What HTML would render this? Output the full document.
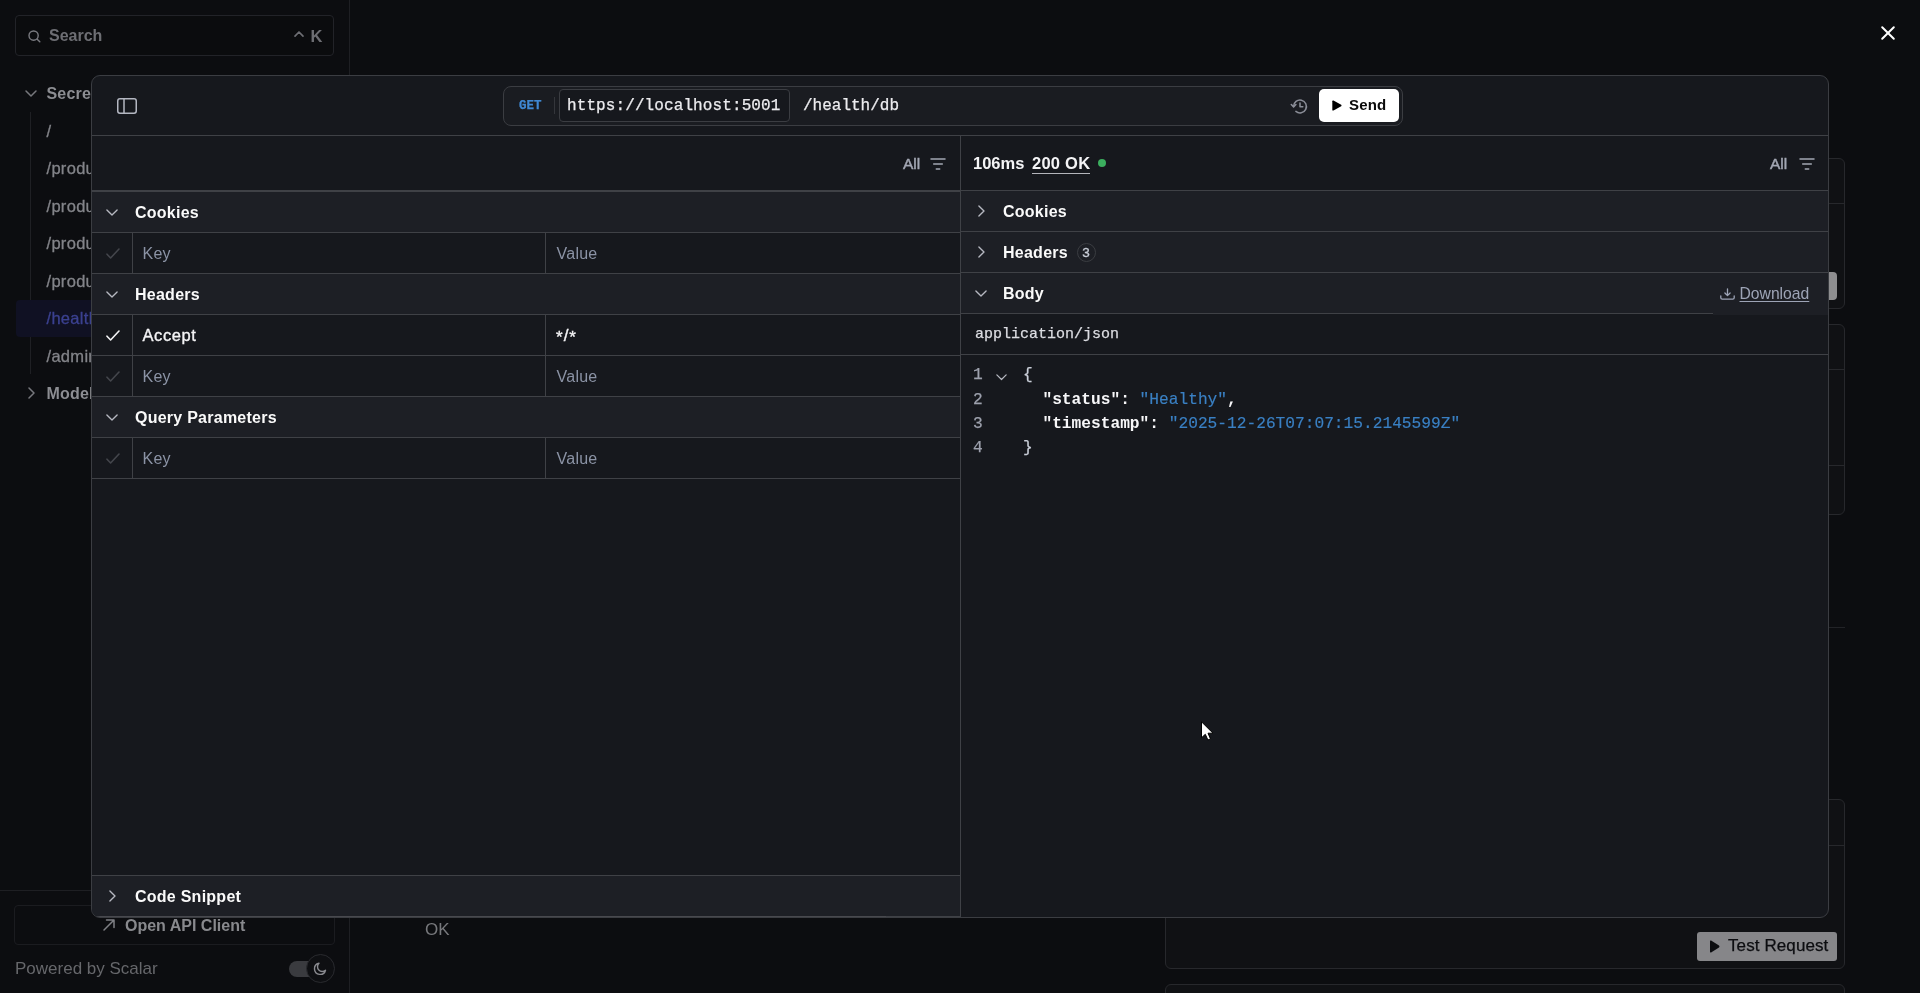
<!DOCTYPE html>
<html lang="en">
<head>
<meta charset="utf-8">
<title>Scalar API Client</title>
<style>
*{box-sizing:border-box;margin:0;padding:0}
html,body{width:1920px;height:993px;overflow:hidden;background:#0c0d10;}
body{position:relative;font-family:"Liberation Sans",sans-serif;color:#fafafa;font-size:16px;line-height:1}
.abs{position:absolute}
.mono{font-family:"Liberation Mono",monospace;-webkit-text-stroke:.25px currentColor}
svg{display:block;overflow:visible}

/* ---------- dimmed page behind ---------- */
#sidebar{position:absolute;left:0;top:0;width:350px;height:993px;border-right:1px solid #1e1f23;will-change:transform}
#search{position:absolute;left:15px;top:15px;width:319px;height:41px;border:1px solid #222328;border-radius:4px;background:#0b0c0e}
.sb-item{position:absolute;left:46.5px;font-size:16.5px;letter-spacing:.3px;-webkit-text-stroke:.3px currentColor;color:#838489;white-space:nowrap;line-height:20px;height:20px}
.sb-bold{-webkit-text-stroke:0;letter-spacing:.2px;font-weight:bold;color:#8c8d92;font-size:16px}

/* ---------- modal ---------- */
#modal{position:absolute;left:91px;top:75px;width:1738px;height:843px;background:#16181d;border:1px solid #3b3d42;border-radius:9px;overflow:hidden}
.hl{position:absolute;height:1px;background:#3f4146}
.vl{position:absolute;width:1px;background:#3f4146}
.sec{position:absolute;height:40px;background:#1d1f25}
.sec-t{letter-spacing:.25px;margin-top:1px;position:absolute;font-weight:bold;font-size:16px;line-height:20px;color:#fafafa;white-space:nowrap}
.ph{letter-spacing:.2px;margin-top:1px;margin-left:.6px;position:absolute;font-size:16px;line-height:20px;color:#8b93a5;white-space:nowrap}
.val{margin-top:1px;position:absolute;font-size:16px;line-height:20px;color:#f4f4f6;white-space:nowrap}
</style>
</head>
<body>

<!-- ================= BACKGROUND PAGE (dimmed) ================= -->
<div id="sidebar">
  <div id="search">
    <svg class="abs" style="left:12px;top:14px" width="13" height="13" viewBox="0 0 13 13" fill="none" stroke="#7a7b80" stroke-width="1.4" stroke-linecap="round"><circle cx="5.6" cy="5.6" r="4.6"/><path d="M9.2 9.2 L11.8 11.8"/></svg>
    <div class="abs" style="left:33px;top:10px;font-size:16px;line-height:20px;font-weight:bold;color:#6d6e73">Search</div>
    <svg class="abs" style="left:278px;top:14.5px" width="10" height="6" viewBox="0 0 10 6" fill="none" stroke="#6d6e73" stroke-width="1.7" stroke-linecap="round" stroke-linejoin="round"><path d="M1 5.2 L5 1 L9 5.2"/></svg>
    <div class="abs" style="left:294.5px;top:10px;font-size:16.5px;line-height:20px;font-weight:bold;color:#6d6e73">K</div>
  </div>
  <svg class="abs" style="left:25px;top:90px" width="12" height="7" viewBox="0 0 12 7" fill="none" stroke="#77787d" stroke-width="1.5" stroke-linecap="round" stroke-linejoin="round"><path d="M1 1 L6 6 L11 1"/></svg>
  <div class="sb-item sb-bold" style="top:84px">Secrets</div>
  <div class="abs" style="left:30px;top:112px;width:1px;height:262px;background:#1f2024"></div>
  <div class="abs" style="left:16px;top:300px;width:320px;height:37px;border-radius:4px;background:#101123"></div>
  <div class="sb-item" style="top:121px">/</div>
  <div class="sb-item" style="top:158px">/products</div>
  <div class="sb-item" style="top:196px">/products</div>
  <div class="sb-item" style="top:233px">/products</div>
  <div class="sb-item" style="top:271px">/products</div>
  <div class="sb-item" style="top:308px;color:#3b4190">/health/db</div>
  <div class="sb-item" style="top:346px">/admin</div>
  <svg class="abs" style="left:28px;top:387px" width="7" height="12" viewBox="0 0 7 12" fill="none" stroke="#77787d" stroke-width="1.5" stroke-linecap="round" stroke-linejoin="round"><path d="M1 1 L6 6 L1 11"/></svg>
  <div class="sb-item sb-bold" style="top:384px">Models</div>

  <div class="abs" style="left:0;top:890px;width:349px;height:1px;background:#1e1f23"></div>
  <div class="abs" style="left:14px;top:905px;width:321px;height:40px;border:1px solid #1b1c20;border-radius:4px"></div>
  <svg class="abs" style="left:103px;top:919px" width="12" height="12" viewBox="0 0 12 12" fill="none" stroke="#7f8085" stroke-width="1.5" stroke-linecap="round" stroke-linejoin="round"><path d="M1 11 L11 1 M3.5 1 H11 V8.5"/></svg>
  <div class="abs" style="left:125px;top:916px;font-size:16px;line-height:20px;font-weight:bold;color:#88898d;white-space:nowrap">Open API Client</div>
  <div class="abs" style="left:15px;top:959px;font-size:17px;line-height:20px;color:#66676b;white-space:nowrap">Powered by Scalar</div>
  <div class="abs" style="left:289px;top:961px;width:34px;height:16px;border-radius:8px;background:#3a3b3f"></div>
  <div class="abs" style="left:306px;top:954px;width:29px;height:29px;border-radius:50%;background:#0e0f12;border:1px solid #2a2b2f"></div>
  <svg class="abs" style="left:314px;top:962px" width="13" height="13" viewBox="0 0 13 13" fill="none" stroke="#8a8b90" stroke-width="1.4" stroke-linecap="round" stroke-linejoin="round"><path d="M11.5 8.2 A5.6 5.6 0 1 1 5 1.3 A4.4 4.4 0 0 0 11.5 8.2 Z"/></svg>
</div>

<div class="abs" style="will-change:transform;left:425px;top:920px;font-size:17px;line-height:20px;color:#77787c">OK</div>

<!-- right cards behind -->
<div class="abs" style="left:1700px;top:158px;width:145px;height:151px;border:1px solid #27282c;border-radius:6px;background:#101114"></div>
<div class="abs" style="left:1700px;top:203px;width:145px;height:1px;background:#27282c"></div>
<div class="abs" style="left:1829px;top:272px;width:8px;height:28px;border-radius:0 4px 4px 0;background:#8e8e90"></div>
<div class="abs" style="left:1700px;top:324px;width:145px;height:191px;border:1px solid #27282c;border-radius:6px;background:#101114"></div>
<div class="abs" style="left:1700px;top:369px;width:145px;height:1px;background:#27282c"></div>
<div class="abs" style="left:1700px;top:465px;width:145px;height:1px;background:#27282c"></div>
<div class="abs" style="left:1700px;top:627px;width:145px;height:1px;background:#222327"></div>
<div class="abs" style="left:1165px;top:799px;width:680px;height:170px;border:1px solid #27282c;border-radius:6px;background:#101114"></div>
<div class="abs" style="left:1165px;top:845px;width:680px;height:1px;background:#27282c"></div>
<div class="abs" style="left:1165px;top:984px;width:680px;height:40px;border:1px solid #27282c;border-radius:6px;background:#101114"></div>
<div class="abs" style="left:1697px;top:932px;width:140px;height:29px;border-radius:3px;background:#868689"></div>
<svg class="abs" style="left:1709px;top:940px" width="11" height="13" viewBox="0 0 11 13"><path d="M1 1.2 Q1 0 2.1 .6 L10 5.6 Q11 6.5 10 7.4 L2.1 12.4 Q1 13 1 11.8 Z" fill="#0c0d10"/></svg>
<div class="abs" style="will-change:transform;left:1728px;top:936px;font-size:17px;line-height:20px;color:#0c0d10;white-space:nowrap;letter-spacing:.1px;-webkit-text-stroke:.25px #0c0d10">Test Request</div>

<!-- close X -->
<svg class="abs" style="left:1881px;top:26px" width="14" height="14" viewBox="0 0 14 14" fill="none" stroke="#ffffff" stroke-width="2" stroke-linecap="round"><path d="M1.2 1.2 L12.8 12.8 M12.8 1.2 L1.2 12.8"/></svg>

<!-- ================= MODAL ================= -->
<div id="modal"><div class="abs" id="mi" style="will-change:transform;left:0;top:-1px;width:1737px;height:843px">
  <!-- top bar -->
  <svg class="abs" style="left:25px;top:23px" width="20" height="16" viewBox="0 0 20 16" fill="none" stroke="#b4b7c2" stroke-width="1.5" stroke-linejoin="round"><rect x=".75" y=".75" width="18.5" height="14.5" rx="2.2"/><path d="M7 .75 V15.25"/></svg>
  <div class="hl" style="left:0;top:60px;width:1737px"></div>

  <div class="abs" style="left:411px;top:11px;width:900px;height:40px;border:1px solid #3b3d42;border-radius:8px;background:#1a1c21"></div>
  <div class="abs mono" style="left:427px;top:21px;font-size:12.5px;line-height:20px;font-weight:bold;color:#3f88d4;letter-spacing:0">GET</div>
  <div class="vl" style="left:462px;top:22px;height:17px;background:#34363b"></div>
  <div class="abs" style="left:467px;top:14px;width:231px;height:33px;border:1px solid #3b3d42;border-radius:4px;background:#16181d"></div>
  <div class="abs mono" style="left:475px;top:21px;font-size:16px;line-height:20px;color:#ececef;white-space:pre;letter-spacing:.1px">https://localhost:5001</div>
  <div class="abs mono" style="left:711px;top:21px;font-size:16px;line-height:20px;color:#ececef;white-space:pre">/health/db</div>
  <svg class="abs" style="left:1197.5px;top:23.5px" width="17" height="15" viewBox="0 0 17 15" fill="none" stroke="#8a8d97" stroke-width="1.55" stroke-linecap="round" stroke-linejoin="round"><path d="M3.6 7.5 A6.4 6.4 0 1 1 5.9 12.4"/><path d="M10 4 V7.7 H12.8"/><path d="M1.3 5.5 L3.6 7.9 L5.9 5.5"/></svg>
  <div class="abs" style="left:1227px;top:14px;width:80px;height:33px;border-radius:5px;background:#ffffff"></div>
  <svg class="abs" style="left:1240px;top:25px" width="10" height="11" viewBox="0 0 10 11"><path d="M.3 1.3 Q.3 0 1.5 .6 L9.2 4.7 Q10 5.5 9.2 6.3 L1.5 10.4 Q.3 11 .3 9.7 Z" fill="#000"/></svg>
  <div class="abs" style="left:1257px;top:20px;font-size:15px;line-height:20px;font-weight:bold;color:#0a0a0a;letter-spacing:.2px">Send</div>

  <!-- row 2 -->
  <div class="hl" style="left:0;top:115px;width:1737px"></div>
  <div class="hl" style="left:0;top:116px;width:868px"></div>
  <div class="vl" style="left:868px;top:61px;height:782px"></div>

  <div class="abs" style="left:811px;top:79px;font-size:15.5px;line-height:20px;color:#a3a7b3;-webkit-text-stroke:.45px #a3a7b3">All</div>
  <svg class="abs" style="left:838px;top:83px" width="16" height="12" viewBox="0 0 16 12" fill="none" stroke="#a3a7b3" stroke-width="1.5" stroke-linecap="round"><path d="M1 1 H15 M3.7 6 H12.3 M6.3 11 H9.7"/></svg>
  <div class="abs" style="left:1678px;top:79px;font-size:15.5px;line-height:20px;color:#a3a7b3;-webkit-text-stroke:.45px #a3a7b3">All</div>
  <svg class="abs" style="left:1707px;top:83px" width="16" height="12" viewBox="0 0 16 12" fill="none" stroke="#a3a7b3" stroke-width="1.5" stroke-linecap="round"><path d="M1 1 H15 M3.7 6 H12.3 M6.3 11 H9.7"/></svg>

  <div class="abs" style="left:881px;top:78px;font-size:16.5px;line-height:20px;color:#f4f4f6;font-weight:bold;white-space:nowrap">106ms</div>
  <div class="abs" style="left:940px;top:78px;font-size:16.5px;line-height:20px;color:#f4f4f6;font-weight:bold;white-space:nowrap;letter-spacing:.25px;border-bottom:1px solid #b4b5bb;height:20.5px">200 OK</div>
  <div class="abs" style="left:1006px;top:84px;width:8px;height:8px;border-radius:50%;background:#3bae5e"></div>

  <!-- LEFT: request sections -->
  <div class="sec" style="left:0px;top:117px;width:868px"></div><svg class="abs" style="left:14px;top:133.5px" width="12" height="7" viewBox="0 0 12 7" fill="none" stroke="#b6b8c1" stroke-width="1.35" stroke-linecap="round" stroke-linejoin="round"><path d="M.9 .9 L6 6 L11.1 .9"/></svg><div class="sec-t" style="left:43px;top:127px">Cookies</div><div class="hl" style="left:0px;top:157px;width:868px"></div>
  <svg class="abs" style="left:14px;top:173px" width="14" height="11" viewBox="0 0 14 11" fill="none" stroke="#44464c" stroke-width="1.6" stroke-linecap="round" stroke-linejoin="round"><path d="M1 6.2 L4.6 10 L13 1"/></svg><div class="vl" style="left:40px;top:158px;height:40px"></div><div class="vl" style="left:453px;top:158px;height:40px"></div><div class="ph" style="left:50px;top:168px">Key</div><div class="ph" style="left:464px;top:168px">Value</div><div class="hl" style="left:0;top:198px;width:868px"></div>
  <div class="sec" style="left:0px;top:199px;width:868px"></div><svg class="abs" style="left:14px;top:215.5px" width="12" height="7" viewBox="0 0 12 7" fill="none" stroke="#b6b8c1" stroke-width="1.35" stroke-linecap="round" stroke-linejoin="round"><path d="M.9 .9 L6 6 L11.1 .9"/></svg><div class="sec-t" style="left:43px;top:209px">Headers</div><div class="hl" style="left:0px;top:239px;width:868px"></div>
  <svg class="abs" style="left:14px;top:255px" width="14" height="11" viewBox="0 0 14 11" fill="none" stroke="#f4f4f6" stroke-width="1.6" stroke-linecap="round" stroke-linejoin="round"><path d="M1 6.2 L4.6 10 L13 1"/></svg><div class="vl" style="left:40px;top:240px;height:40px"></div><div class="vl" style="left:453px;top:240px;height:40px"></div><div class="val" style="left:50.5px;top:249px;font-size:16.5px;letter-spacing:.6px;-webkit-text-stroke:.35px #f4f4f6">Accept</div><div class="val" style="left:464px;top:250px;font-size:17px;letter-spacing:1px;-webkit-text-stroke:.35px #f4f4f6"><span style="position:relative;top:1.5px">*</span>/<span style="position:relative;top:1.5px">*</span></div><div class="hl" style="left:0;top:280px;width:868px"></div>
  <svg class="abs" style="left:14px;top:296px" width="14" height="11" viewBox="0 0 14 11" fill="none" stroke="#44464c" stroke-width="1.6" stroke-linecap="round" stroke-linejoin="round"><path d="M1 6.2 L4.6 10 L13 1"/></svg><div class="vl" style="left:40px;top:281px;height:40px"></div><div class="vl" style="left:453px;top:281px;height:40px"></div><div class="ph" style="left:50px;top:291px">Key</div><div class="ph" style="left:464px;top:291px">Value</div><div class="hl" style="left:0;top:321px;width:868px"></div>
  <div class="sec" style="left:0px;top:322px;width:868px"></div><svg class="abs" style="left:14px;top:338.5px" width="12" height="7" viewBox="0 0 12 7" fill="none" stroke="#b6b8c1" stroke-width="1.35" stroke-linecap="round" stroke-linejoin="round"><path d="M.9 .9 L6 6 L11.1 .9"/></svg><div class="sec-t" style="left:43px;top:332px">Query Parameters</div><div class="hl" style="left:0px;top:362px;width:868px"></div>
  <svg class="abs" style="left:14px;top:378px" width="14" height="11" viewBox="0 0 14 11" fill="none" stroke="#44464c" stroke-width="1.6" stroke-linecap="round" stroke-linejoin="round"><path d="M1 6.2 L4.6 10 L13 1"/></svg><div class="vl" style="left:40px;top:363px;height:40px"></div><div class="vl" style="left:453px;top:363px;height:40px"></div><div class="ph" style="left:50px;top:373px">Key</div><div class="ph" style="left:464px;top:373px">Value</div><div class="hl" style="left:0;top:403px;width:868px"></div>
  <div class="hl" style="left:0;top:800px;width:868px"></div>
  <div class="sec" style="left:0px;top:801px;width:868px"></div><svg class="abs" style="left:17px;top:815px" width="7" height="12" viewBox="0 0 7 12" fill="none" stroke="#b6b8c1" stroke-width="1.35" stroke-linecap="round" stroke-linejoin="round"><path d="M.9 .9 L6 6 L.9 11.1"/></svg><div class="sec-t" style="left:43px;top:811px">Code Snippet</div><div class="hl" style="left:0px;top:841px;width:868px"></div>
  <div class="abs" style="left:0;top:841px;width:794px;height:2px;background:#48494e"></div>
  <!-- RIGHT: response sections -->
  <div class="sec" style="left:869px;top:116px;width:868px"></div><svg class="abs" style="left:886px;top:130px" width="7" height="12" viewBox="0 0 7 12" fill="none" stroke="#b6b8c1" stroke-width="1.35" stroke-linecap="round" stroke-linejoin="round"><path d="M.9 .9 L6 6 L.9 11.1"/></svg><div class="sec-t" style="left:911px;top:126px">Cookies</div><div class="hl" style="left:869px;top:156px;width:868px"></div>
  <div class="sec" style="left:869px;top:157px;width:868px"></div><svg class="abs" style="left:886px;top:171px" width="7" height="12" viewBox="0 0 7 12" fill="none" stroke="#b6b8c1" stroke-width="1.35" stroke-linecap="round" stroke-linejoin="round"><path d="M.9 .9 L6 6 L.9 11.1"/></svg><div class="sec-t" style="left:911px;top:167px">Headers</div><div class="hl" style="left:869px;top:197px;width:868px"></div>
  <div class="abs" style="left:984.5px;top:167.5px;width:19px;height:19px;border:1px solid #3b3d42;border-radius:50%;font-size:13.5px;line-height:17px;text-align:center;color:#c9ced8;-webkit-text-stroke:.3px #c9ced8">3</div>
  <div class="sec" style="left:869px;top:198px;width:868px"></div><svg class="abs" style="left:882.5px;top:214.5px" width="12" height="7" viewBox="0 0 12 7" fill="none" stroke="#b6b8c1" stroke-width="1.35" stroke-linecap="round" stroke-linejoin="round"><path d="M.9 .9 L6 6 L11.1 .9"/></svg><div class="sec-t" style="left:911px;top:208px">Body</div><div class="hl" style="left:869px;top:238px;width:868px"></div>
  <div class="abs" style="left:1621px;top:199px;width:116px;height:41px;background:#1d1f25"></div>
  <svg class="abs" style="left:1628px;top:212.5px" width="15" height="12" viewBox="0 0 15 12" fill="none" stroke="#9da4b6" stroke-width="1.3" stroke-linecap="round" stroke-linejoin="round"><path d="M7.5 .8 V7.4 M4.9 5 L7.5 7.6 L10.1 5 M.8 8 V9.8 Q.8 11.2 2.2 11.2 H12.8 Q14.2 11.2 14.2 9.8 V8"/></svg>
  <div class="abs" style="left:1647.5px;top:209px;font-size:15.7px;line-height:20px;color:#9da4b6;text-decoration:underline;text-decoration-thickness:1px;text-underline-offset:1.5px;white-space:nowrap">Download</div>
  <div class="abs mono" style="left:883px;top:250px;font-size:15px;line-height:20px;color:#dcdde2;white-space:pre">application/json</div>
  <div class="hl" style="left:869px;top:279px;width:868px"></div>
  <div class="abs mono" style="left:881px;top:288px;font-size:16.2px;line-height:25px;color:#9da1ad;white-space:pre">1</div><div class="abs mono" style="left:931px;top:288px;font-size:16.2px;line-height:25px;color:#c9ced8;white-space:pre">{</div>
  <svg class="abs" style="left:904px;top:298.5px" width="11" height="6.4" viewBox="0 0 12 7" fill="none" stroke="#b6b8c1" stroke-width="1.35" stroke-linecap="round" stroke-linejoin="round"><path d="M.9 .9 L6 6 L11.1 .9"/></svg>
  <div class="abs mono" style="left:881px;top:313px;font-size:16.2px;line-height:25px;color:#9da1ad;white-space:pre">2</div><div class="abs mono" style="left:931px;top:313px;font-size:16.2px;line-height:25px;color:#c9ced8;white-space:pre">  <b style="color:#f7f7f9;-webkit-text-stroke:0">&quot;status&quot;:</b> <span style="color:#3a80c4;-webkit-text-stroke:.15px #3a80c4">&quot;Healthy&quot;</span><b style="color:#f7f7f9;-webkit-text-stroke:0">,</b></div>
  <div class="abs mono" style="left:881px;top:337px;font-size:16.2px;line-height:25px;color:#9da1ad;white-space:pre">3</div><div class="abs mono" style="left:931px;top:337px;font-size:16.2px;line-height:25px;color:#c9ced8;white-space:pre">  <b style="color:#f7f7f9;-webkit-text-stroke:0">&quot;timestamp&quot;:</b> <span style="color:#3a80c4;-webkit-text-stroke:.15px #3a80c4">&quot;2025-12-26T07:07:15.2145599Z&quot;</span></div>
  <div class="abs mono" style="left:881px;top:361px;font-size:16.2px;line-height:25px;color:#9da1ad;white-space:pre">4</div><div class="abs mono" style="left:931px;top:361px;font-size:16.2px;line-height:25px;color:#c9ced8;white-space:pre">}</div>
</div></div>

<!-- mouse cursor -->
<svg class="abs" style="left:1200px;top:720px" width="16" height="22" viewBox="0 0 16 22"><path d="M1.5 1.8 V17.8 L5.3 14.3 L7.9 20 L10.5 18.9 L8 13.2 H13 Z" fill="#ffffff" stroke="#000000" stroke-width="1" stroke-linejoin="round"/></svg>

</body>
</html>
